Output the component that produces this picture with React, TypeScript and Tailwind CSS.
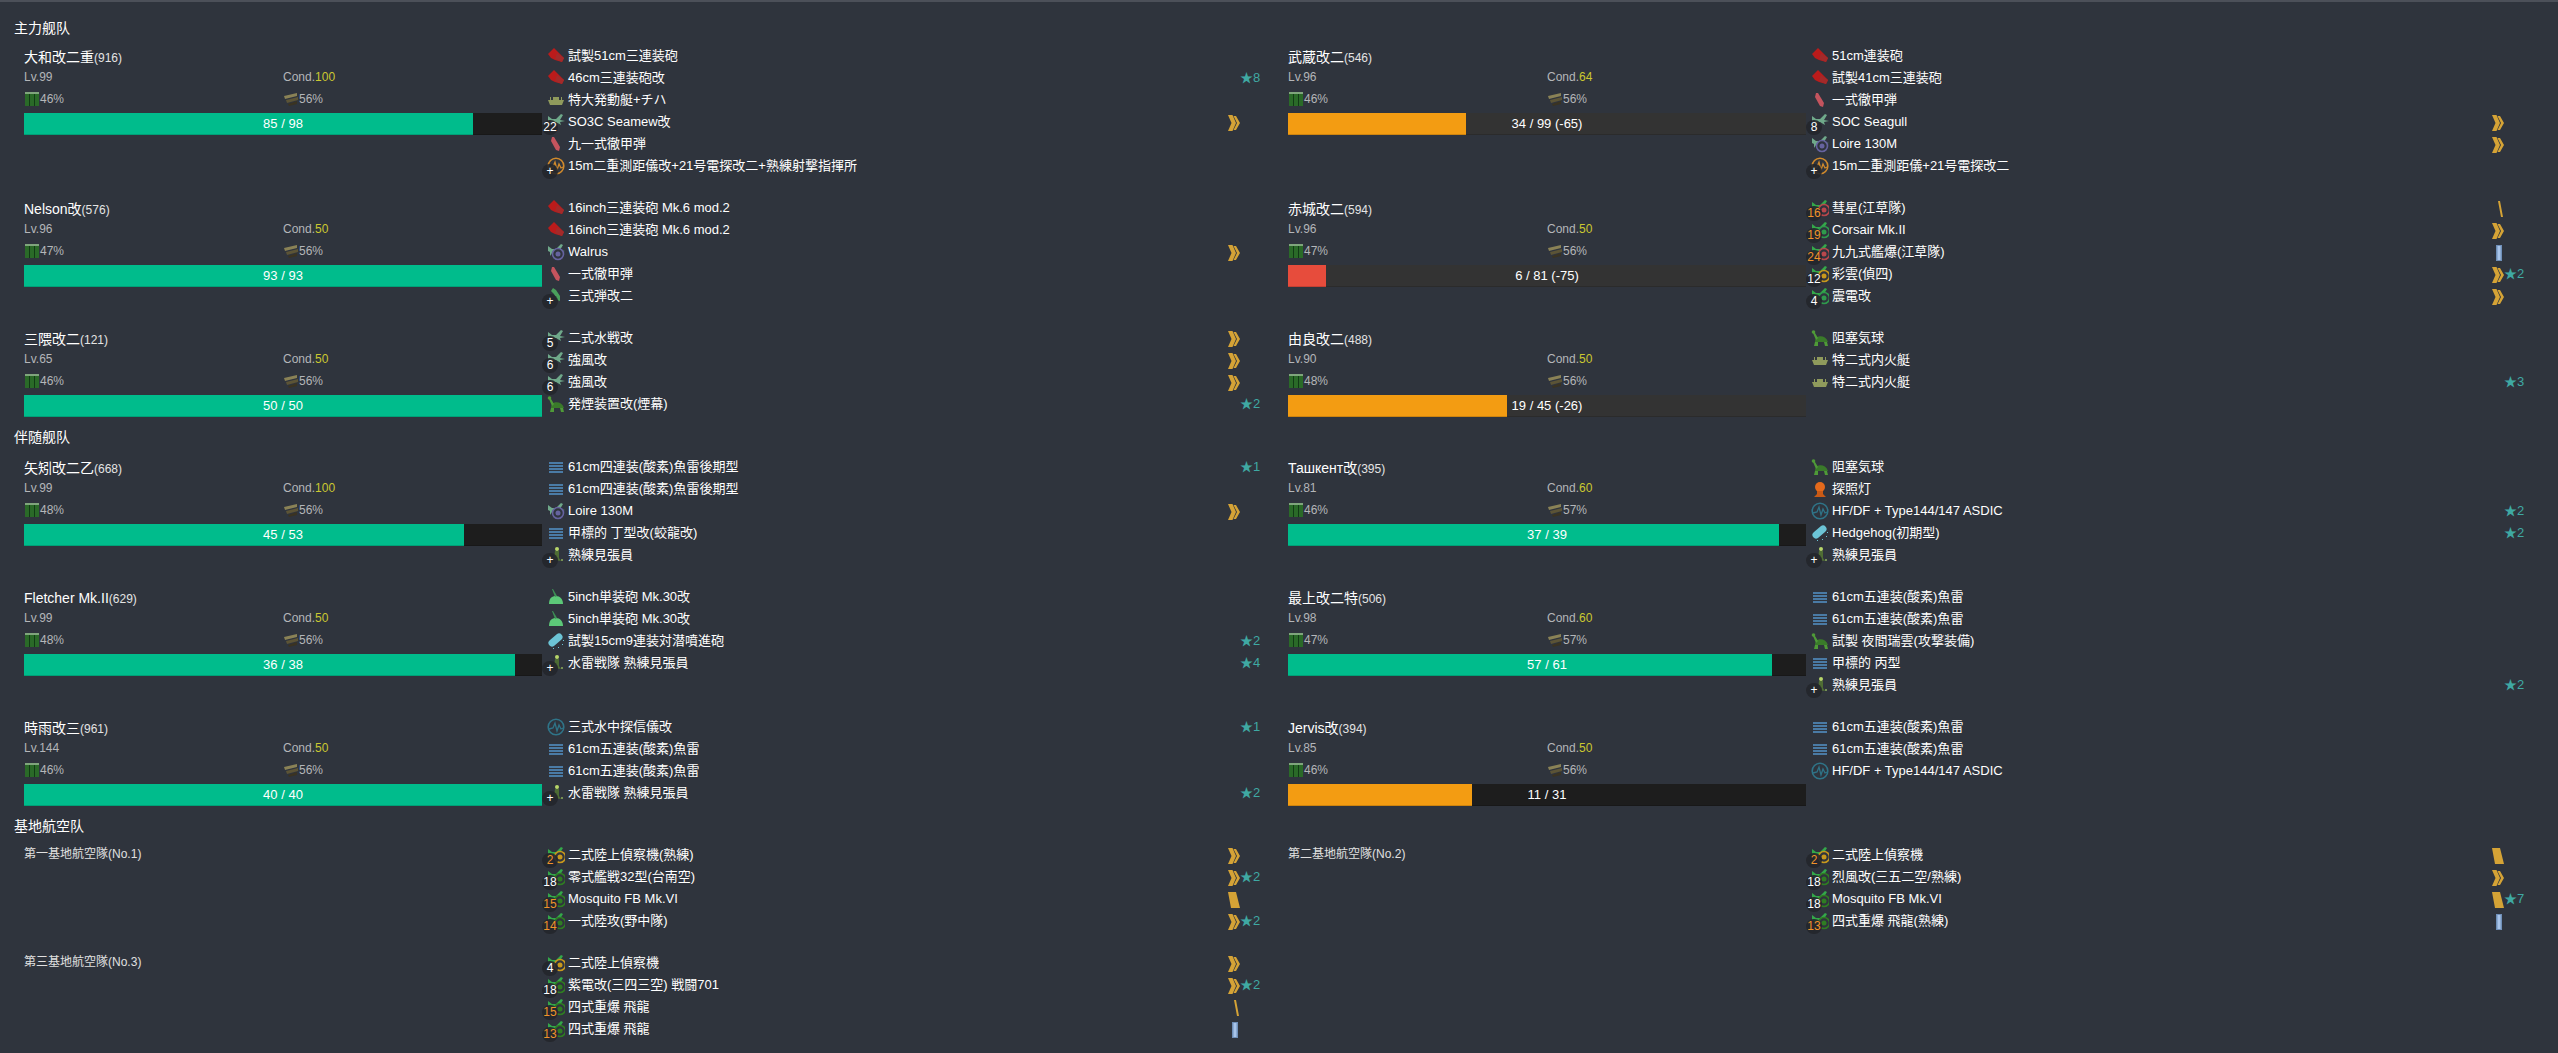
type IconKind =
  | "gun" | "shell" | "boat" | "sea" | "seaQ" | "radar" | "bomber" | "fighter" | "recon"
  | "land" | "torp" | "turtle" | "shell3" | "look" | "small" | "depth" | "light" | "sonar"
type Rank = "chev" | "slash" | "bars" | "band"
type Equip = { icon: IconKind; name: string; badge?: string; hot?: boolean; rank?: Rank; star?: number }
type Ship = {
  name: string; id: number; lv: number; cond: number; fuel: number; ammo: number
  hp: number; max: number; lost?: number; color?: string; equips: Equip[]
}
type Base = { name: string; no: number; equips: Equip[] }

const torp5 = "61cm五連装(酸素)魚雷"
const torp4 = "61cm四連装(酸素)魚雷後期型"
const asdic = "HF/DF + Type144/147 ASDIC"

const mainFleet: Ship[] = [
  {
    name: "大和改二重", id: 916, lv: 99, cond: 100, fuel: 46, ammo: 56, hp: 85, max: 98,
    equips: [
      { icon: "gun", name: "試製51cm三連装砲" },
      { icon: "gun", name: "46cm三連装砲改", star: 8 },
      { icon: "boat", name: "特大発動艇+チハ" },
      { icon: "sea", name: "SO3C Seamew改", badge: "22", rank: "chev" },
      { icon: "shell", name: "九一式徹甲弾" },
      { icon: "radar", name: "15m二重測距儀改+21号電探改二+熟練射撃指揮所", badge: "+" },
    ],
  },
  {
    name: "武蔵改二", id: 546, lv: 96, cond: 64, fuel: 46, ammo: 56, hp: 34, max: 99, lost: 65, color: "bg-[#f39c12]",
    equips: [
      { icon: "gun", name: "51cm連装砲" },
      { icon: "gun", name: "試製41cm三連装砲" },
      { icon: "shell", name: "一式徹甲弾" },
      { icon: "sea", name: "SOC Seagull", badge: "8", rank: "chev" },
      { icon: "seaQ", name: "Loire 130M", rank: "chev" },
      { icon: "radar", name: "15m二重測距儀+21号電探改二", badge: "+" },
    ],
  },
  {
    name: "Nelson改", id: 576, lv: 96, cond: 50, fuel: 47, ammo: 56, hp: 93, max: 93,
    equips: [
      { icon: "gun", name: "16inch三連装砲 Mk.6 mod.2" },
      { icon: "gun", name: "16inch三連装砲 Mk.6 mod.2" },
      { icon: "seaQ", name: "Walrus", rank: "chev" },
      { icon: "shell", name: "一式徹甲弾" },
      { icon: "shell3", name: "三式弾改二", badge: "+" },
    ],
  },
  {
    name: "赤城改二", id: 594, lv: 96, cond: 50, fuel: 47, ammo: 56, hp: 6, max: 81, lost: 75, color: "bg-[#e74c3c]",
    equips: [
      { icon: "bomber", name: "彗星(江草隊)", badge: "16", hot: true, rank: "slash" },
      { icon: "fighter", name: "Corsair Mk.II", badge: "19", hot: true, rank: "chev" },
      { icon: "bomber", name: "九九式艦爆(江草隊)", badge: "24", hot: true, rank: "bars" },
      { icon: "recon", name: "彩雲(偵四)", badge: "12", rank: "chev", star: 2 },
      { icon: "fighter", name: "震電改", badge: "4", rank: "chev" },
    ],
  },
  {
    name: "三隈改二", id: 121, lv: 65, cond: 50, fuel: 46, ammo: 56, hp: 50, max: 50,
    equips: [
      { icon: "sea", name: "二式水戦改", badge: "5", rank: "chev" },
      { icon: "sea", name: "強風改", badge: "6", rank: "chev" },
      { icon: "sea", name: "強風改", badge: "6", rank: "chev" },
      { icon: "turtle", name: "発煙装置改(煙幕)", star: 2 },
    ],
  },
  {
    name: "由良改二", id: 488, lv: 90, cond: 50, fuel: 48, ammo: 56, hp: 19, max: 45, lost: 26, color: "bg-[#f39c12]",
    equips: [
      { icon: "turtle", name: "阻塞気球" },
      { icon: "boat", name: "特二式内火艇" },
      { icon: "boat", name: "特二式内火艇", star: 3 },
    ],
  },
]

const escortFleet: Ship[] = [
  {
    name: "矢矧改二乙", id: 668, lv: 99, cond: 100, fuel: 48, ammo: 56, hp: 45, max: 53,
    equips: [
      { icon: "torp", name: torp4, star: 1 },
      { icon: "torp", name: torp4 },
      { icon: "seaQ", name: "Loire 130M", rank: "chev" },
      { icon: "torp", name: "甲標的 丁型改(蛟龍改)" },
      { icon: "look", name: "熟練見張員", badge: "+" },
    ],
  },
  {
    name: "Ташкент改", id: 395, lv: 81, cond: 60, fuel: 46, ammo: 57, hp: 37, max: 39,
    equips: [
      { icon: "turtle", name: "阻塞気球" },
      { icon: "light", name: "探照灯" },
      { icon: "sonar", name: asdic, star: 2 },
      { icon: "depth", name: "Hedgehog(初期型)", star: 2 },
      { icon: "look", name: "熟練見張員", badge: "+" },
    ],
  },
  {
    name: "Fletcher Mk.II", id: 629, lv: 99, cond: 50, fuel: 48, ammo: 56, hp: 36, max: 38,
    equips: [
      { icon: "small", name: "5inch単装砲 Mk.30改" },
      { icon: "small", name: "5inch単装砲 Mk.30改" },
      { icon: "depth", name: "試製15cm9連装対潜噴進砲", star: 2 },
      { icon: "look", name: "水雷戦隊 熟練見張員", badge: "+", star: 4 },
    ],
  },
  {
    name: "最上改二特", id: 506, lv: 98, cond: 60, fuel: 47, ammo: 57, hp: 57, max: 61,
    equips: [
      { icon: "torp", name: torp5 },
      { icon: "torp", name: torp5 },
      { icon: "turtle", name: "試製 夜間瑞雲(攻撃装備)" },
      { icon: "torp", name: "甲標的 丙型" },
      { icon: "look", name: "熟練見張員", badge: "+", star: 2 },
    ],
  },
  {
    name: "時雨改三", id: 961, lv: 144, cond: 50, fuel: 46, ammo: 56, hp: 40, max: 40,
    equips: [
      { icon: "sonar", name: "三式水中探信儀改", star: 1 },
      { icon: "torp", name: torp5 },
      { icon: "torp", name: torp5 },
      { icon: "look", name: "水雷戦隊 熟練見張員", badge: "+", star: 2 },
    ],
  },
  {
    name: "Jervis改", id: 394, lv: 85, cond: 50, fuel: 46, ammo: 56, hp: 11, max: 31, color: "bg-[#f39c12]",
    equips: [
      { icon: "torp", name: torp5 },
      { icon: "torp", name: torp5 },
      { icon: "sonar", name: asdic },
    ],
  },
]

const bases: Base[] = [
  {
    name: "第一基地航空隊", no: 1,
    equips: [
      { icon: "recon", name: "二式陸上偵察機(熟練)", badge: "2", hot: true, rank: "chev" },
      { icon: "land", name: "零式艦戦32型(台南空)", badge: "18", rank: "chev", star: 2 },
      { icon: "land", name: "Mosquito FB Mk.VI", badge: "15", hot: true, rank: "band" },
      { icon: "land", name: "一式陸攻(野中隊)", badge: "14", hot: true, rank: "chev", star: 2 },
    ],
  },
  {
    name: "第二基地航空隊", no: 2,
    equips: [
      { icon: "recon", name: "二式陸上偵察機", badge: "2", hot: true, rank: "band" },
      { icon: "land", name: "烈風改(三五二空/熟練)", badge: "18", rank: "chev" },
      { icon: "land", name: "Mosquito FB Mk.VI", badge: "18", rank: "band", star: 7 },
      { icon: "land", name: "四式重爆 飛龍(熟練)", badge: "13", hot: true, rank: "bars" },
    ],
  },
  {
    name: "第三基地航空隊", no: 3,
    equips: [
      { icon: "recon", name: "二式陸上偵察機", badge: "4", rank: "chev" },
      { icon: "land", name: "紫電改(三四三空) 戦闘701", badge: "18", rank: "chev", star: 2 },
      { icon: "land", name: "四式重爆 飛龍", badge: "15", hot: true, rank: "slash" },
      { icon: "land", name: "四式重爆 飛龍", badge: "13", hot: true, rank: "bars" },
    ],
  },
]

const planeDisc: Partial<Record<IconKind, string>> = {
  bomber: "#b9474c",
  fighter: "#2f9a4c",
  recon: "#c8981c",
  land: "#2f7d22",
  seaQ: "#66639f",
}

function EquipIcon({ kind }: { kind: IconKind }) {
  const disc = planeDisc[kind]
  return (
    <svg viewBox="0 0 18 18" className="w-[18px] h-[18px] block">
      {kind === "gun" && (
        <>
          <path d="M1 7 L7 1 L11 5 L17 11 L15 15 L8 13 L4 11 Z" fill="#bb1b1b" />
          <path d="M10 6 L17 11 L15 15 L8 12 Z" fill="#a32a2a" />
        </>
      )}
      {kind === "shell" && <path d="M5 2 L7 2 L13 12 L12 16 L9 15 L4 6 Z" fill="#c4545e" />}
      {kind === "boat" && (
        <path d="M1 9 H6 V6 H12 V9 H17 L15 14 H3 Z M3 6 H4 V9 H3 Z M14 6 H15 V9 H14 Z" fill="#8f9a5c" />
      )}
      {(kind === "sea" || disc) && (
        <path
          d="M1 3 L5 6 L9 6 L14 1 L16 2 L13 7 L18 8 L13 9 L14 12 L9 9 L5 10 L3 13 L3 9 L1 8 Z"
          fill={kind === "sea" || kind === "seaQ" ? "#6fa98a" : "#34a84a"}
        />
      )}
      {disc && (
        <>
          <circle cx={kind === "seaQ" ? 11 : 13} cy="11" r="5.5" fill="#2f343d" stroke={disc} strokeWidth="1.6" />
          <circle cx={kind === "seaQ" ? 11 : 13} cy="11" r="2.5" fill={disc} />
        </>
      )}
      {(kind === "radar" || kind === "sonar") && (
        <>
          <circle cx="9" cy="9" r="7.8" fill="none" stroke={kind === "radar" ? "#d18a2c" : "#2f7488"} strokeWidth="1.6" />
          <path
            d="M2 11 L6 10 L8 5 L10 13 L12 7 L14 11 L16 10"
            fill="none"
            stroke={kind === "radar" ? "#d18a2c" : "#2f7488"}
            strokeWidth="1.3"
          />
        </>
      )}
      {kind === "torp" && <path d="M2 4 H16 V6 H2 Z M2 7 H16 V9 H2 Z M2 10 H16 V12 H2 Z M2 13 H16 V15 H2 Z" fill="#4a7ba6" />}
      {kind === "turtle" && (
        <>
          <path d="M4 13 C4 6 14 5 17 13 Z" fill="#3a7a2a" />
          <circle cx="2.5" cy="3" r="1.8" fill="#4f9a38" />
          <path d="M2 4 L4 4 L7 9 L5 11 Z M4 13 H7 V17 H3 Z M13 13 H16 L17 17 H14 Z" fill="#4f9a38" />
        </>
      )}
      {kind === "shell3" && <path d="M6 1 L9 3 L13 9 L13 14 L10 13 L7 7 L4 4 Z" fill="#4aa05c" />}
      {kind === "look" && (
        <>
          <circle cx="10" cy="3" r="2" fill="#b8d66a" />
          <path d="M8 5 L12 5 L12 12 L14 15 L7 14 Z" fill="#4f6d34" />
          <circle cx="15" cy="14" r="1" fill="#8fae5c" />
        </>
      )}
      {kind === "small" && (
        <>
          <path d="M2 16 C2 10 5 8 9 8 C13 8 16 11 16 16 Z" fill="#5cc878" />
          <path d="M5 1 L6 1 L10 8 L8 9 Z" fill="#3d8f55" />
        </>
      )}
      {kind === "depth" && (
        <>
          <path d="M5 11 L12 5" stroke="#6cc4d6" strokeWidth="7" strokeLinecap="round" />
          <path d="M16 8 H17 V9 H16 Z M15 12 H16 V13 H15 Z M11 15 H12 V16 H11 Z M6 16 H7 V17 H6 Z" fill="#6cc4d6" />
        </>
      )}
      {kind === "light" && (
        <>
          <circle cx="9" cy="7" r="5" fill="#e46a1c" />
          <path d="M6 11 H12 L12 14 L15 17 H3 L6 14 Z" fill="#c95a16" />
        </>
      )}
    </svg>
  )
}

function RankIcon({ rank }: { rank?: Rank }) {
  if (!rank) return <span className="w-[12px] shrink-0" />
  return (
    <svg viewBox="0 0 12 16" className="w-[12px] h-[16px] mt-[2px] shrink-0">
      {rank === "chev" && (
        <path d="M0 0 H4.5 L8 8 L4.5 16 H0 L3.5 8 Z M5.5 1 H8 L12 8 L8 15 H5.5 L9 8 Z" fill="#d5a336" />
      )}
      {rank === "slash" && <path d="M6 0 H8 L11 16 H9 Z" fill="#d5a336" />}
      {rank === "bars" && (
        <>
          <path d="M4 0 H10 V16 H4 Z" fill="#6f8fb8" />
          <path d="M5.5 1 H8.5 V15 H5.5 Z" fill="#a8c4ea" />
        </>
      )}
      {rank === "band" && <path d="M0 0 H8 L12 16 H3 Z" fill="#d5a336" />}
    </svg>
  )
}

function EquipRow({ e }: { e: Equip }) {
  return (
    <div className="flex items-start h-[22px]">
      <div className="relative w-[21px] h-[18px] shrink-0 pl-[5px]">
        <EquipIcon kind={e.icon} />
        {e.badge && (
          <span
            className={`absolute left-0 top-[7px] w-[16px] h-[15px] pb-[2px] rounded-full bg-[#23262b]/90 flex items-center justify-center text-[12px] leading-none ${
              e.hot ? "text-[#f0932b]" : "text-white"
            }`}
          >
            {e.badge}
          </span>
        )}
      </div>
      <span className="flex-1 text-[13px] leading-[18px] text-white whitespace-nowrap pl-[5px]">{e.name}</span>
      <RankIcon rank={e.rank} />
      <span className="w-[18px] shrink-0 text-[13px] leading-[18px] text-[#3fa9a3] whitespace-nowrap">
        {e.star ? `★${e.star}` : ""}
      </span>
    </div>
  )
}

function FuelIcon() {
  return (
    <svg viewBox="0 0 16 16" className="w-[16px] h-[16px] shrink-0">
      <path d="M1 1 H15 V15 H1 Z" fill="#2a6a28" />
      <path d="M1 1 H15 V3 H1 Z" fill="#7fa57c" />
      <path d="M5 3 H6 V15 H5 Z M10 3 H11 V15 H10 Z" fill="#123a16" />
    </svg>
  )
}

function AmmoIcon() {
  return (
    <svg viewBox="0 0 16 16" className="w-[16px] h-[16px] shrink-0">
      <path d="M1 5 L14 2 L14 5 L2 8 Z" fill="#8a8256" />
      <path d="M3 9 L15 6 L15 9 L4 12 Z" fill="#5c5436" />
      <path d="M5 13 L14 10 L14 13 L6 15 Z" fill="#3a3322" />
    </svg>
  )
}

function ShipCard({ ship }: { ship: Ship }) {
  const pct = (ship.hp / ship.max) * 100
  return (
    <div className="flex">
      <div className="w-[527px] shrink-0 pl-[9px]">
        <div className="h-[22px] leading-[20px] text-[14px] text-white whitespace-nowrap">
          {ship.name}
          <span className="text-[12px] text-[#e4e4e4]">({ship.id})</span>
        </div>
        <div className="grid grid-cols-2 items-start h-[22px] text-[12px] leading-[16px] text-[#b4b6b9]">
          <span>Lv.{ship.lv}</span>
          <span>
            Cond.<span className="text-[#cbc830]">{ship.cond}</span>
          </span>
        </div>
        <div className="grid grid-cols-2 items-start h-[22px] text-[12px] leading-[16px] text-[#b4b6b9]">
          <span className="flex items-center">
            <FuelIcon />
            {ship.fuel}%
          </span>
          <span className="flex items-center">
            <AmmoIcon />
            {ship.ammo}%
          </span>
        </div>
        <div
          className={`relative h-[22px] shadow-[inset_0_-1px_0_rgba(0,0,0,0.15)] ${
            ship.lost ? "bg-[#333333]" : "bg-[#1d1d1d]"
          }`}
        >
          <div
            className={`h-full shadow-[inset_0_-1px_0_rgba(0,0,0,0.15)] ${ship.color ?? "bg-[#00bc8c]"}`}
            style={{ width: `${pct}%` }}
          />
          <div className="absolute inset-0 flex items-center justify-center text-[13px] text-white">
            {ship.hp} / {ship.max}
            {ship.lost ? ` (-${ship.lost})` : ""}
          </div>
        </div>
      </div>
      <div className="flex-1 pr-[21px] min-w-0">
        {ship.equips.map((e, i) => (
          <EquipRow key={i} e={e} />
        ))}
      </div>
    </div>
  )
}

function BaseCard({ base }: { base: Base }) {
  return (
    <div className="flex">
      <div className="w-[527px] shrink-0 pl-[9px]">
        <div className="h-[22px] leading-[16px] text-[12px] text-[#e0e0e0]">
          {base.name}({`No.${base.no}`})
        </div>
      </div>
      <div className="flex-1 pr-[21px] min-w-0">
        {base.equips.map((e, i) => (
          <EquipRow key={i} e={e} />
        ))}
      </div>
    </div>
  )
}

function SectionTitle({ children, className }: { children: string; className: string }) {
  return <h2 className={`h-[20px] pl-[14px] text-[14px] leading-[20px] text-white font-normal ${className}`}>{children}</h2>
}

export default function App() {
  return (
    <div className="min-h-screen bg-[#2f343d] border-t-2 border-[#4c5059] pt-[6px] [font-family:'Liberation_Sans','Noto_Sans_CJK_JP',sans-serif]">
      <section className="pt-[10px]">
        <SectionTitle className="mb-[9px]">主力舰队</SectionTitle>
        <div className="grid grid-cols-2 gap-y-[20px] px-[15px]">
          {mainFleet.map((s) => (
            <ShipCard key={s.id} ship={s} />
          ))}
        </div>
      </section>
      <section className="pt-[10px]">
        <SectionTitle className="mb-[11px]">伴随舰队</SectionTitle>
        <div className="grid grid-cols-2 gap-y-[20px] px-[15px]">
          {escortFleet.map((s) => (
            <ShipCard key={s.id} ship={s} />
          ))}
        </div>
      </section>
      <section className="pt-[10px]">
        <SectionTitle className="mb-[10px]">基地航空队</SectionTitle>
        <div className="grid grid-cols-2 gap-y-[20px] px-[15px]">
          {bases.map((b) => (
            <BaseCard key={b.no} base={b} />
          ))}
        </div>
      </section>
    </div>
  )
}
